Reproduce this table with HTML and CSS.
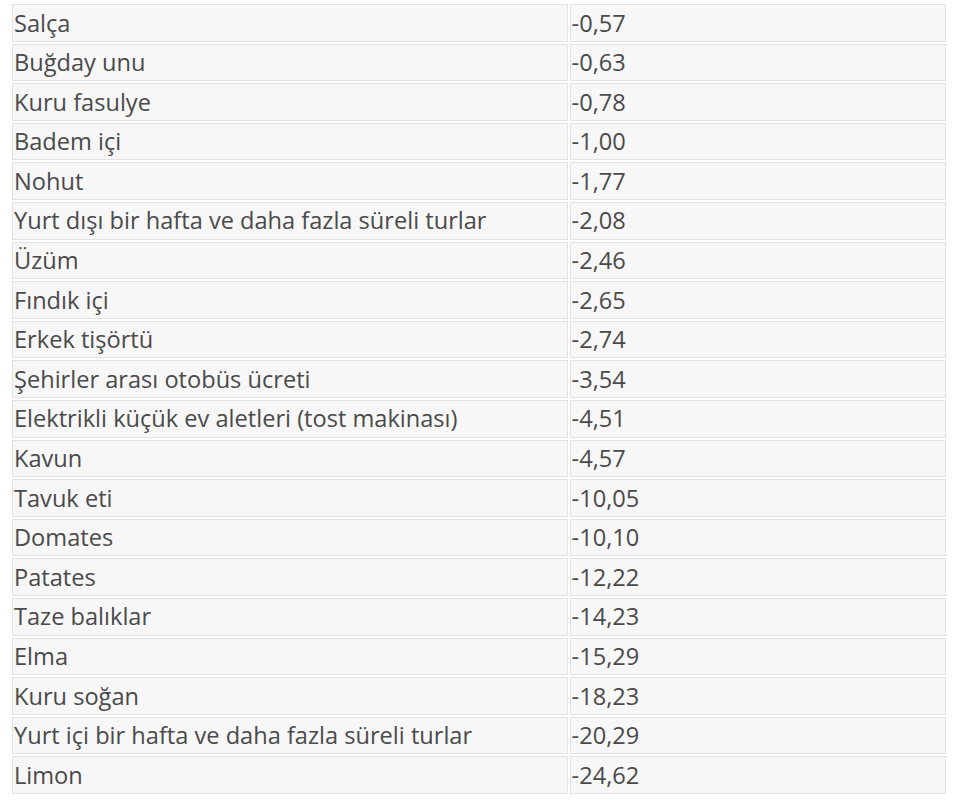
FILE: index.html
```html
<!DOCTYPE html>
<html lang="tr">
<head>
<meta charset="utf-8">
<link rel="stylesheet" href="styles.css">
</head>
<body>
<table class="data">
<tbody>
<tr><td class="name">Salça</td><td class="val">-0,57</td></tr>
<tr><td class="name">Buğday unu</td><td class="val">-0,63</td></tr>
<tr><td class="name">Kuru fasulye</td><td class="val">-0,78</td></tr>
<tr><td class="name">Badem içi</td><td class="val">-1,00</td></tr>
<tr><td class="name">Nohut</td><td class="val">-1,77</td></tr>
<tr><td class="name">Yurt dışı bir hafta ve daha fazla süreli turlar</td><td class="val">-2,08</td></tr>
<tr><td class="name">Üzüm</td><td class="val">-2,46</td></tr>
<tr><td class="name">Fındık içi</td><td class="val">-2,65</td></tr>
<tr><td class="name">Erkek tişörtü</td><td class="val">-2,74</td></tr>
<tr><td class="name">Şehirler arası otobüs ücreti</td><td class="val">-3,54</td></tr>
<tr><td class="name">Elektrikli küçük ev aletleri (tost makinası)</td><td class="val">-4,51</td></tr>
<tr><td class="name">Kavun</td><td class="val">-4,57</td></tr>
<tr><td class="name">Tavuk eti</td><td class="val">-10,05</td></tr>
<tr><td class="name">Domates</td><td class="val">-10,10</td></tr>
<tr><td class="name">Patates</td><td class="val">-12,22</td></tr>
<tr><td class="name">Taze balıklar</td><td class="val">-14,23</td></tr>
<tr><td class="name">Elma</td><td class="val">-15,29</td></tr>
<tr><td class="name">Kuru soğan</td><td class="val">-18,23</td></tr>
<tr><td class="name">Yurt içi bir hafta ve daha fazla süreli turlar</td><td class="val">-20,29</td></tr>
<tr><td class="name">Limon</td><td class="val">-24,62</td></tr>
</tbody>
</table>
</body>
</html>
```
FILE: styles.css
```css
html, body {
  margin: 0;
  padding: 0;
  background: #ffffff;
}
.data {
  margin: 2px 0 0 10px;
  width: 938px;
  border-collapse: separate;
  border-spacing: 2px;
  font-family: "Open Sans", "Noto Sans", sans-serif;
  font-size: 23.6px;
  color: #4a4a4a;
  table-layout: fixed;
}
.data td {
  height: 37.6px;
  padding: 1px 0 0 1px;
  box-sizing: border-box;
  background: #f7f7f7;
  border: 1px solid #e2e2e2;
  vertical-align: middle;
  white-space: nowrap;
  line-height: 1;
}
.data .name {
  width: 555px;
}
.data .val {
  width: 376px;
}
```
